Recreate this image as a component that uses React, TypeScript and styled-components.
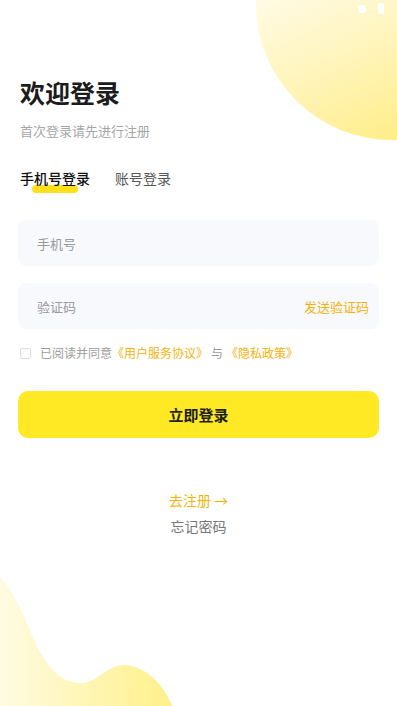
import React from "react";
import styled, { createGlobalStyle } from "styled-components";

const GlobalStyle = createGlobalStyle`
  * { box-sizing: border-box; }
  html, body { margin: 0; padding: 0; background: #ffffff; }
  body {
    font-family: "Noto Sans CJK SC", "Noto Sans", sans-serif;
    -webkit-font-smoothing: antialiased;
  }
`;

const Page = styled.div`
  position: relative;
  width: 397px;
  height: 706px;
  overflow: hidden;
  background: #ffffff;
`;

const TopBlob = styled.div`
  position: absolute;
  left: 256px;
  top: -132px;
  width: 272px;
  height: 272px;
  border-radius: 50%;
  background: linear-gradient(155deg, #fffdf2 25%, #fff4b8 60%, #ffec7e 90%);
`;

const StatusIcons = styled.svg`
  position: absolute;
  right: 10px;
  top: 3px;
`;

const BottomWave = styled.svg`
  position: absolute;
  left: 0;
  bottom: 0;
`;

const Content = styled.div`
  position: relative;
  padding: 74px 18px 0;
`;

const Title = styled.h1`
  margin: 0 0 0 2px;
  font-size: 25px;
  line-height: 36px;
  font-weight: 700;
  color: #1c1c1c;
`;

const Subtitle = styled.p`
  margin: 12px 0 0 2px;
  font-size: 13px;
  line-height: 18px;
  color: #a6a6a6;
`;

const Tabs = styled.div`
  display: flex;
  gap: 25px;
  margin: 28px 0 0 2px;
`;

const Tab = styled.span<{ $active?: boolean }>`
  position: relative;
  font-size: 14px;
  line-height: 20px;
  font-weight: ${(p) => (p.$active ? 500 : 400)};
  color: ${(p) => (p.$active ? "#111111" : "#555555")};

  &::before {
    content: "";
    display: ${(p) => (p.$active ? "block" : "none")};
    position: absolute;
    left: 12px;
    right: 12px;
    bottom: -5px;
    height: 8px;
    border-radius: 4px;
    background: #ffe01b;
  }
`;

const TabText = styled.span`
  position: relative;
`;

const Field = styled.div<{ $top: number }>`
  display: flex;
  align-items: center;
  justify-content: space-between;
  height: 46px;
  margin-top: ${(p) => p.$top}px;
  padding: 0 10px 0 19px;
  border-radius: 8px;
  background: #f8f9fd;
`;

const Placeholder = styled.span`
  font-size: 13px;
  color: #9a9a9a;
`;

const SendCode = styled.span`
  font-size: 13px;
  color: #f3b20b;
`;

const Agreement = styled.div`
  display: flex;
  align-items: center;
  margin: 15px 0 0 2px;
  font-size: 12px;
  line-height: 18px;
  color: #9c9c9c;
`;

const CheckBox = styled.span`
  width: 11px;
  height: 11px;
  margin-right: 9px;
  border: 1px solid #dcdcdc;
  border-radius: 2px;
`;

const LinkText = styled.span`
  color: #f3b20b;
`;

const Gap = styled.span`
  margin: 0 3px;
`;

const LoginButton = styled.button`
  display: block;
  width: 100%;
  height: 47px;
  margin-top: 29px;
  border: none;
  border-radius: 10px;
  background: #ffe924;
  font-family: inherit;
  font-size: 15px;
  font-weight: 700;
  color: #1e1e1e;
`;

const Footer = styled.div`
  display: flex;
  flex-direction: column;
  align-items: center;
  gap: 6px;
  margin-top: 52px;
  font-size: 14px;
  line-height: 20px;
`;

const Register = styled.span`
  color: #f0b40c;
`;

const Forgot = styled.span`
  color: #777777;
`;

export default function App() {
  return (
    <Page>
      <GlobalStyle />
      <TopBlob />
      <StatusIcons width="30" height="12" viewBox="0 0 30 12">
        <circle cx="5" cy="6" r="4" fill="#ffffff" />
        <rect x="21" y="0" width="6" height="11" rx="1" fill="#ffffff" />
      </StatusIcons>
      <BottomWave width="180" height="130" viewBox="0 576 180 130">
        <defs>
          <linearGradient id="wave" x1="0" y1="0" x2="1" y2="0">
            <stop offset="0" stopColor="#fffbe2" />
            <stop offset="1" stopColor="#fff08a" />
          </linearGradient>
        </defs>
        <path
          d="M0 577 C18 596 28 628 40 652 C52 674 66 684 82 683 C98 682 108 664 126 665 C148 667 166 688 172 706 L0 706 Z"
          fill="url(#wave)"
        />
      </BottomWave>
      <Content>
        <Title>欢迎登录</Title>
        <Subtitle>首次登录请先进行注册</Subtitle>
        <Tabs>
          <Tab $active>
            <TabText>手机号登录</TabText>
          </Tab>
          <Tab>
            <TabText>账号登录</TabText>
          </Tab>
        </Tabs>
        <Field $top={32}>
          <Placeholder>手机号</Placeholder>
        </Field>
        <Field $top={17}>
          <Placeholder>验证码</Placeholder>
          <SendCode>发送验证码</SendCode>
        </Field>
        <Agreement>
          <CheckBox />
          已阅读并同意
          <LinkText>《用户服务协议》</LinkText>
          <Gap>与</Gap>
          <LinkText>《隐私政策》</LinkText>
        </Agreement>
        <LoginButton>立即登录</LoginButton>
        <Footer>
          <Register>去注册 →</Register>
          <Forgot>忘记密码</Forgot>
        </Footer>
      </Content>
    </Page>
  );
}
